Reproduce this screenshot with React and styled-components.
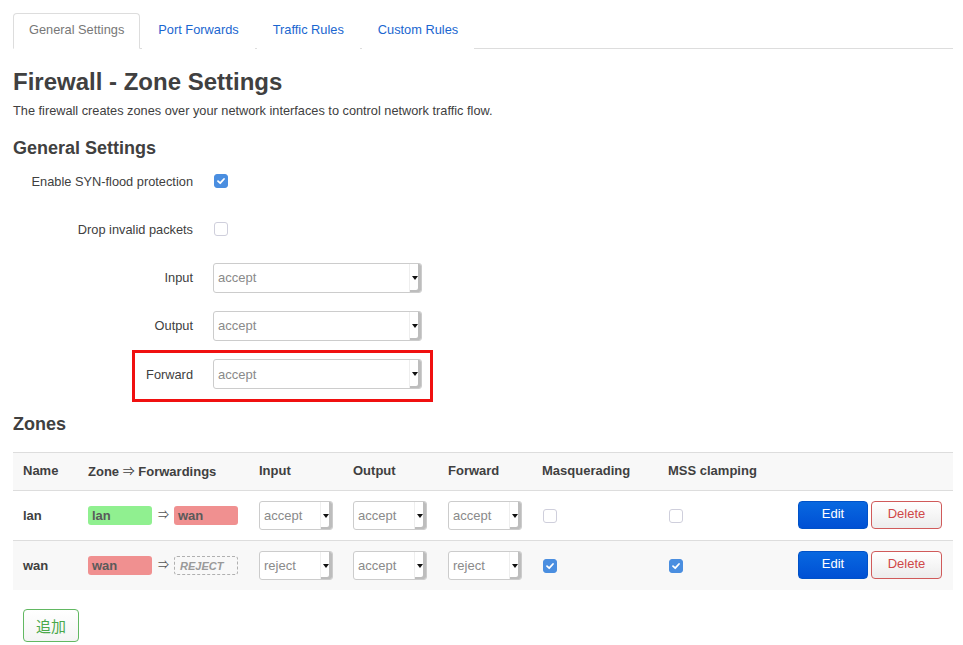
import React from "react";
import styled, { createGlobalStyle } from "styled-components";

const GlobalStyle = createGlobalStyle`
  body {
    margin: 0;
    background: #fff;
    color: #404040;
    font-family: "Liberation Sans", Arial, "Noto Sans CJK JP", sans-serif;
    font-size: 13px;
  }
  *, *::before, *::after {
    box-sizing: border-box;
  }
`;

const tabs = ["General Settings", "Port Forwards", "Traffic Rules", "Custom Rules"];

const settings = [
    { label: "Enable SYN-flood protection", type: "check", checked: true },
    { label: "Drop invalid packets", type: "check", checked: false },
    { label: "Input", type: "select", value: "accept" },
    { label: "Output", type: "select", value: "accept" },
    { label: "Forward", type: "select", value: "accept", marked: true },
];

const zones = [
    {
        name: "lan",
        color: "#90f090",
        dest: { name: "wan", color: "#f09090" },
        input: "accept",
        output: "accept",
        forward: "accept",
        masq: false,
        mss: false,
    },
    {
        name: "wan",
        color: "#f09090",
        dest: null,
        input: "reject",
        output: "accept",
        forward: "reject",
        masq: true,
        mss: true,
    },
];

function Check({ checked }) {
    return (
        <Box $checked={checked}>
            {checked && (
                <svg width="10" height="10" viewBox="0 0 10 10">
                    <path
                        d="M2 5.2 L4.2 7.2 L8 3"
                        fill="none"
                        stroke="#fff"
                        strokeWidth="1.8"
                        strokeLinecap="round"
                        strokeLinejoin="round"
                    />
                </svg>
            )}
        </Box>
    );
}

function Dropdown({ value, wide }) {
    return (
        <Select $wide={wide}>
            <SelectValue>{value}</SelectValue>
            <SelectArrow />
        </Select>
    );
}

function App() {
    return (
        <Page>
            <GlobalStyle />
            <TabBar>
                {tabs.map((t, i) => (
                    <Tab key={t} $active={i === 0}>
                        {t}
                    </Tab>
                ))}
            </TabBar>

            <Title>Firewall - Zone Settings</Title>
            <Description>
                The firewall creates zones over your network interfaces to control
                network traffic flow.
            </Description>

            <Heading>General Settings</Heading>
            <Form>
                {settings.map((s) => (
                    <FormRow key={s.label} $marked={s.marked}>
                        <Label>{s.label}</Label>
                        {s.type === "check" ? (
                            <Check checked={s.checked} />
                        ) : (
                            <Dropdown value={s.value} wide />
                        )}
                    </FormRow>
                ))}
            </Form>

            <ZonesHeading>Zones</ZonesHeading>
            <Table>
                <Row $head>
                    <Th>Name</Th>
                    <Th>
                        Zone <HeadArrow>⇒</HeadArrow> Forwardings
                    </Th>
                    <Th>Input</Th>
                    <Th>Output</Th>
                    <Th>Forward</Th>
                    <Th>Masquerading</Th>
                    <Th>MSS clamping</Th>
                    <Th />
                </Row>
                {zones.map((z, i) => (
                    <Row key={z.name} $alt={i % 2 === 1}>
                        <NameCell>{z.name}</NameCell>
                        <Cell>
                            <Forwarding>
                                <Badge $color={z.color}>{z.name}</Badge>
                                <Arrow>⇒</Arrow>
                                {z.dest ? (
                                    <Badge $color={z.dest.color}>{z.dest.name}</Badge>
                                ) : (
                                    <Reject>REJECT</Reject>
                                )}
                            </Forwarding>
                        </Cell>
                        <Cell>
                            <Dropdown value={z.input} />
                        </Cell>
                        <Cell>
                            <Dropdown value={z.output} />
                        </Cell>
                        <Cell>
                            <Dropdown value={z.forward} />
                        </Cell>
                        <Cell>
                            <Check checked={z.masq} />
                        </Cell>
                        <Cell>
                            <Check checked={z.mss} />
                        </Cell>
                        <Actions>
                            <EditButton>Edit</EditButton>
                            <DeleteButton>Delete</DeleteButton>
                        </Actions>
                    </Row>
                ))}
            </Table>

            <AddButton>追加</AddButton>
        </Page>
    );
}

const Page = styled.div`
    padding: 13px 10px 20px 13px;
`;

const TabBar = styled.ul`
    display: flex;
    margin: 0;
    padding: 0;
    list-style: none;
    border-bottom: 1px solid #ddd;
`;

const Tab = styled.li`
    margin: 0 2px -1px 0;
    padding: 8px 15px 10px;
    line-height: 16px;
    font-size: 12.8px;
    border: 1px solid ${(p) => (p.$active ? "#ddd" : "transparent")};
    border-bottom-color: ${(p) => (p.$active ? "#fff" : "transparent")};
    border-radius: 4px 4px 0 0;
    background: #fff;
    color: ${(p) => (p.$active ? "#777" : "#1a66d0")};
`;

const Title = styled.h2`
    margin: 15px 0 0;
    font-size: 24px;
    line-height: 36px;
    font-weight: bold;
    color: #404040;
`;

const Description = styled.p`
    margin: 2px 0 0;
    font-size: 12.75px;
    line-height: 18px;
`;

const Heading = styled.h3`
    margin: 15px 0 0;
    font-size: 18px;
    line-height: 27px;
    font-weight: bold;
`;

const ZonesHeading = styled(Heading)`
    margin-top: 22px;
`;

const Form = styled.div`
    display: flex;
    flex-direction: column;
    gap: 18.3px;
    margin-top: 4px;
`;

const FormRow = styled.div`
    position: relative;
    display: flex;
    align-items: center;
    gap: 20px;
    height: 30px;

    &::after {
        content: "";
        display: ${(p) => (p.$marked ? "block" : "none")};
        position: absolute;
        left: 119px;
        top: -9px;
        width: 301px;
        height: 52px;
        border: 3px solid #f01010;
    }
`;

const Label = styled.label`
    width: 180px;
    text-align: right;
    font-size: 12.8px;
    color: #404040;
`;

const Box = styled.span`
    display: inline-flex;
    align-items: center;
    justify-content: center;
    width: 14px;
    height: 14px;
    margin-left: 1px;
    border-radius: 3px;
    border: 1px solid ${(p) => (p.$checked ? "#4a8ee0" : "#cfcfdc")};
    background: ${(p) => (p.$checked ? "#4a8ee0" : "#fff")};
`;

const Select = styled.div`
    display: flex;
    width: ${(p) => (p.$wide ? "209px" : "74px")};
    height: ${(p) => (p.$wide ? "30px" : "29px")};
    border: 1px solid #ccc;
    border-radius: 3px;
    background: #fff;
    color: #8a8a8a;
    font-size: 13px;
`;

const SelectValue = styled.span`
    flex: 1;
    display: flex;
    align-items: center;
    padding-left: 4px;
`;

const SelectArrow = styled.span`
    display: flex;
    align-items: center;
    justify-content: center;
    width: 12px;
    border-left: 1px solid #eee;
    border-radius: 0 2px 2px 0;
    box-shadow: inset -3px -2px 0 #bdbdbd;

    &::before {
        content: "";
        margin-right: 2px;
        border-left: 3px solid transparent;
        border-right: 3px solid transparent;
        border-top: 4px solid #111;
    }
`;

const Table = styled.div`
    margin-top: 14px;
`;

const Row = styled.div`
    display: grid;
    grid-template-columns: 65px 171px 94px 95px 94px 126px 1fr 155px;
    align-items: center;
    height: ${(p) => (p.$head ? "38px" : "50px")};
    padding-bottom: ${(p) => (p.$head ? "3px" : "0")};
    border-top: 1px solid #ddd;
    background: ${(p) => (p.$head || p.$alt ? "#f8f8f8" : "#fff")};
`;

const Th = styled.div`
    padding-left: 10px;
    font-weight: bold;
    font-size: 13px;
    color: #404040;
`;

const HeadArrow = styled.span`
    font-weight: normal;
    font-size: 12px;
`;

const Cell = styled.div`
    display: flex;
    align-items: center;
    padding-left: 10px;
`;

const NameCell = styled(Cell)`
    font-weight: bold;
`;

const Forwarding = styled.div`
    display: flex;
    align-items: center;
`;

const Badge = styled.span`
    display: inline-flex;
    align-items: center;
    width: 64px;
    height: 19px;
    padding-left: 4px;
    border-radius: 3px;
    background: ${(p) => p.$color};
    color: #5a5a5a;
    font-weight: bold;
    font-size: 13px;
`;

const Reject = styled(Badge)`
    background: transparent;
    border: 1px dashed #b0b0b0;
    color: #9a9a9a;
    font-style: italic;
    font-size: 11px;
    padding-left: 5px;
`;

const Arrow = styled.span`
    margin: 0 5px 3px 6px;
    font-size: 11px;
    color: #555;
`;

const Actions = styled.div`
    display: flex;
    gap: 3px;
    padding-right: 11px;
    margin-bottom: 2px;
`;

const Button = styled.button`
    height: 28px;
    border-radius: 4px;
    font-family: inherit;
    font-size: 13px;
    padding: 0 0 3px;
    cursor: pointer;
`;

const EditButton = styled(Button)`
    width: 70px;
    border: 1px solid #0052c8;
    background: linear-gradient(#0868e0, #0050d4);
    color: #fff;
`;

const DeleteButton = styled(Button)`
    width: 71px;
    border: 1px solid #d05a5a;
    background: linear-gradient(#fff, #ececec);
    color: #d04848;
`;

const AddButton = styled.button`
    display: block;
    margin: 19px 0 0 10px;
    width: 56px;
    height: 33px;
    border: 1px solid #62b862;
    border-radius: 4px;
    background: linear-gradient(#fff, #f4f4f4);
    color: #4aa84a;
    font-family: "Noto Sans CJK JP", "Noto Sans CJK SC", sans-serif;
    font-size: 15px;
    padding: 0;
`;

export default App;
